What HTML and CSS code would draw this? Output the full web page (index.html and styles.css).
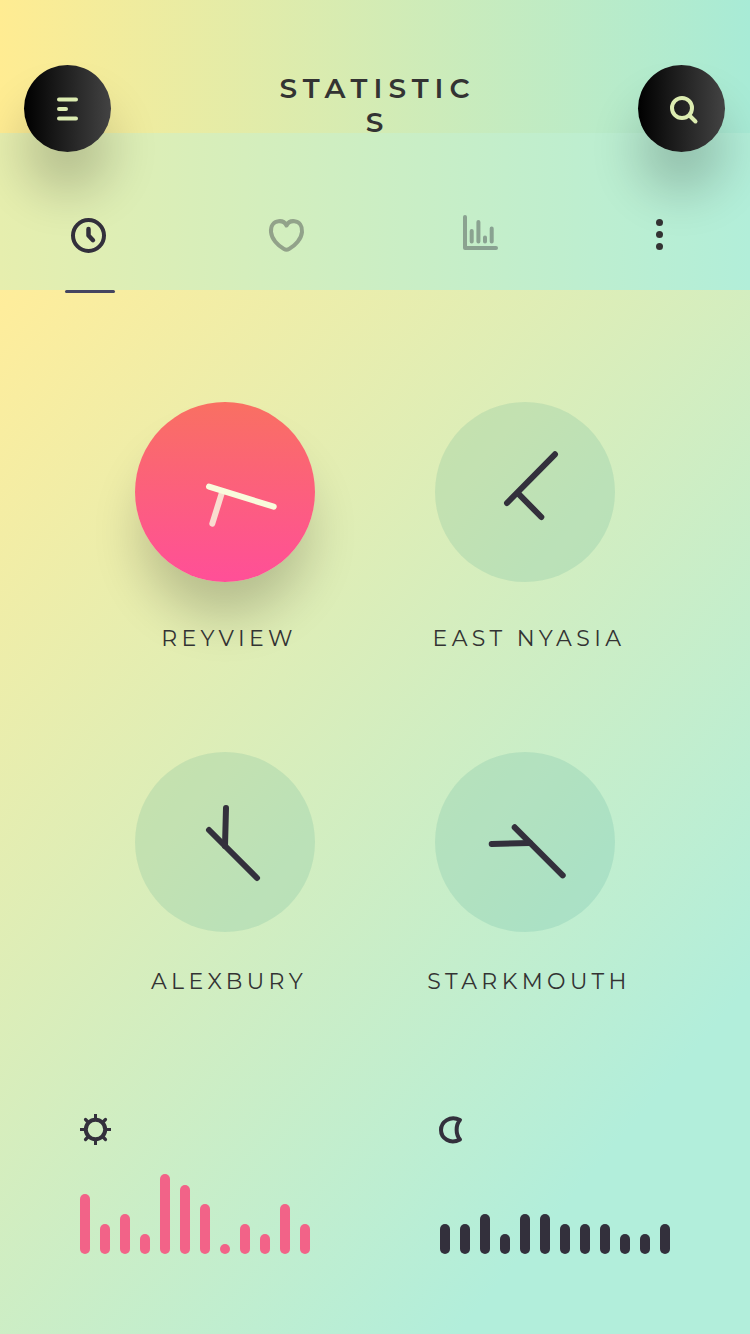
FILE: index.html
```html
<!DOCTYPE html>
<html lang="en">
<head>
<meta charset="utf-8">
<meta name="viewport" content="width=device-width, initial-scale=1">
<title>Statistics</title>
<link rel="stylesheet" href="styles.css">
</head>
<body>
<header class="topbar">
  <button class="round-button" type="button" aria-label="Menu">
    <svg width="32" height="32" viewBox="0 0 32 32" fill="none" stroke="currentColor" stroke-width="4" stroke-linecap="round"><path d="M7 6.500H24M7 16H14M7 25.500H24"/></svg>
  </button>
  <h1 class="title">STATISTICS</h1>
  <button class="round-button" type="button" aria-label="Search">
    <svg width="32" height="32" viewBox="0 0 32 32" fill="none" stroke="currentColor" stroke-width="4" stroke-linecap="round"><circle cx="16" cy="15" r="10"/><path d="M24 23L29.500 28.500"/></svg>
  </button>
</header>

<nav class="tabs" aria-label="Views">
  <button class="tab tab--active" type="button" aria-label="Clocks">
    <svg width="36" height="36" viewBox="0 0 36 36" fill="none" stroke="currentColor" stroke-width="4"><circle cx="16.500" cy="18.500" r="15.500"/><path d="M16.500 12V18.500L21 23.200" stroke-width="4.500" stroke-linecap="round" stroke-linejoin="round"/></svg>
  </button>
  <button class="tab tab--muted" type="button" aria-label="Favourites">
    <svg width="36" height="36" viewBox="0 0 36 36" fill="none" stroke="currentColor" stroke-width="4" stroke-linejoin="round"><path d="M19.500 8.500C21.500 4.500 25 3.900 27.500 4.200C32.500 4.800 35.500 9 35 15C34.300 22 28.500 28.500 22 32Q19.500 33.300 17 32C10.500 28.500 4.700 22 4 15C3.500 9 6.500 4.800 11.500 4.200C14 3.900 17.500 4.500 19.500 8.500Z"/></svg>
  </button>
  <button class="tab tab--muted" type="button" aria-label="Charts">
    <svg width="36" height="36" viewBox="0 0 36 36" fill="none" stroke="currentColor" stroke-width="4" stroke-linecap="round" stroke-linejoin="round"><path d="M4 0V31H35M10.700 14V24.500M17.400 5V24.500M24 20.500V24.500M30.700 11.500V24.500"/></svg>
  </button>
  <button class="tab" type="button" aria-label="More">
    <svg width="8" height="36" viewBox="0 0 8 36" fill="#333"><circle cx="3.500" cy="5.500" r="3.500"/><circle cx="3.500" cy="17.500" r="3.500"/><circle cx="3.500" cy="29.500" r="3.500"/></svg>
  </button>
</nav>

<main class="content">
  <section class="clocks clocks--first">
    <figure class="city">
      <svg class="clock clock--active" viewBox="0 0 180 180" role="img" aria-label="Clock"><path class="hand hand--hour" d="M86.700 91.300L77.300 121.700"/><path class="hand" d="M74 84.700L138.700 104.700"/></svg>
      <figcaption class="city-name">REYVIEW</figcaption>
    </figure>
    <figure class="city">
      <svg class="clock" viewBox="0 0 180 180" role="img" aria-label="Clock"><path class="hand" d="M83.300 91.700L106.300 115"/><path class="hand" d="M120 52.300L72 101"/></svg>
      <figcaption class="city-name">EAST NYASIA</figcaption>
    </figure>
  </section>
  <section class="clocks">
    <figure class="city">
      <svg class="clock" viewBox="0 0 180 180" role="img" aria-label="Clock"><path class="hand" d="M91 56L90 94"/><path class="hand" d="M74 78L122 126"/></svg>
      <figcaption class="city-name">ALEXBURY</figcaption>
    </figure>
    <figure class="city">
      <svg class="clock" viewBox="0 0 180 180" role="img" aria-label="Clock"><path class="hand" d="M56.700 92L95 91"/><path class="hand" d="M79.700 75.300L127.700 123.300"/></svg>
      <figcaption class="city-name">STARKMOUTH</figcaption>
    </figure>
  </section>

  <section class="charts">
    <div class="chart chart--day">
      <svg width="32" height="32" viewBox="0 0 32 32" fill="none" stroke="currentColor"><circle cx="15.500" cy="15.500" r="9.700" stroke-width="4"/><path stroke-width="3" d="M15.500 0V5M15.500 26V31M0 15.500H5M26 15.500H31"/><path stroke-width="3.200" stroke-linecap="round" d="M5.500 5.500L8.500 8.500M22.500 22.500L25.500 25.500M25.500 5.500L22.500 8.500M8.500 22.500L5.500 25.500"/></svg>
      <div class="bars">
        <i class="bar" style="height:60px"></i><i class="bar" style="height:30px"></i><i class="bar" style="height:40px"></i><i class="bar" style="height:20px"></i><i class="bar" style="height:80px"></i><i class="bar" style="height:69px"></i><i class="bar" style="height:50px"></i><i class="bar" style="height:10px"></i><i class="bar" style="height:30px"></i><i class="bar" style="height:20px"></i><i class="bar" style="height:50px"></i><i class="bar" style="height:30px"></i>
      </div>
    </div>
    <div class="chart">
      <svg width="32" height="32" viewBox="0 0 32 32" fill="none" stroke="currentColor" stroke-width="4" stroke-linejoin="round"><path d="M20 6C10 1 1 8 1 16S10 31 20 25.500C15.500 20.500 15.500 11 20 6Z"/></svg>
      <div class="bars">
        <i class="bar" style="height:30px"></i><i class="bar" style="height:30px"></i><i class="bar" style="height:40px"></i><i class="bar" style="height:20px"></i><i class="bar" style="height:40px"></i><i class="bar" style="height:40px"></i><i class="bar" style="height:30px"></i><i class="bar" style="height:30px"></i><i class="bar" style="height:30px"></i><i class="bar" style="height:20px"></i><i class="bar" style="height:20px"></i><i class="bar" style="height:30px"></i>
      </div>
    </div>
  </section>
</main>
</body>
</html>
```
FILE: styles.css
```css
* { box-sizing: border-box; }

body {
  margin: 0;
  min-height: 100vh;
  display: flex;
  flex-direction: column;
  font-family: Montserrat, Inter, "Open Sans", sans-serif;
  color: #333;
}

button {
  margin: 0;
  padding: 0;
  border: 0;
  background: none;
  color: inherit;
  cursor: pointer;
}

svg { display: block; overflow: visible; }

.topbar {
  position: relative;
  z-index: 1;
  display: flex;
  justify-content: space-between;
  align-items: flex-start;
  padding: 65px 25px 0 24px;
  background: linear-gradient(90deg, #ffec92, #a8ebd6);
}

/* The round buttons hang over the tab strip below. */
.round-button {
  display: flex;
  align-items: center;
  justify-content: center;
  width: 87px;
  height: 87px;
  margin-bottom: -19px;
  border-radius: 50%;
  background: linear-gradient(90deg, #000, #434343);
  box-shadow: 0 40px 50px rgba(0, 0, 0, .2);
  color: #dcecb0;
}

.title {
  max-width: 208px;
  margin: 6px 0 -6px;
  padding-left: 6px;
  font-size: 28px;
  line-height: 34px;
  font-weight: 600;
  letter-spacing: 6px;
  text-align: center;
  overflow-wrap: anywhere;
}

.tabs {
  display: flex;
  justify-content: space-between;
  padding: 84px 86px 0 72px;
  background: linear-gradient(90deg, #e6eeae, #b2eed9);
}

.tab {
  display: flex;
  justify-content: center;
  height: 73px;
  color: #33303c;
}

.tab--active {
  position: relative;
}

.tab--active::after {
  content: "";
  position: absolute;
  left: -7px;
  right: -7px;
  bottom: -3px;
  height: 3px;
  border-radius: 2px;
  background: #454560;
}

.tab--muted { color: rgba(51, 48, 60, .4); }

.content {
  flex: 1;
  display: flex;
  flex-direction: column;
  padding: 112px 0 80px;
  background: linear-gradient(130deg, #ffed9b, #b2eedb 82%);
}

.clocks {
  display: grid;
  grid-template-columns: 1fr 1fr;
  padding: 0 75px;
}

.clocks--first { margin-bottom: 99px; }
.clocks--first .city { gap: 43px; }

.city {
  display: flex;
  flex-direction: column;
  align-items: center;
  gap: 36px;
  margin: 0;
}

.city-name {
  padding-left: 8px;
  font-size: 22px;
  line-height: 28px;
  font-weight: 400;
  letter-spacing: 0.2em;
  white-space: nowrap;
}

.clock {
  width: 180px;
  height: 180px;
  border-radius: 50%;
  background: rgba(0, 125, 120, .11);
  color: #33303c;
}

.clock--active {
  background: linear-gradient(#f97062, #ff4f98);
  box-shadow: 0 40px 50px -6px rgba(0, 0, 0, .2);
  color: #f9fbdc;
}

.clock--active .hand--hour { stroke: #f9dccf; }

.hand {
  fill: none;
  stroke: currentColor;
  stroke-width: 6;
  stroke-linecap: round;
}

.charts {
  display: flex;
  justify-content: space-between;
  margin-top: auto;
  padding: 0 80px;
}

.chart {
  display: flex;
  flex-direction: column;
  gap: 28px;
  color: #33303c;
}

.bars {
  display: flex;
  align-items: flex-end;
  gap: 10px;
  height: 80px;
}

.bar {
  width: 10px;
  border-radius: 5px;
  background: #33303c;
}

.chart--day .bar { background: #f26388; }
```
